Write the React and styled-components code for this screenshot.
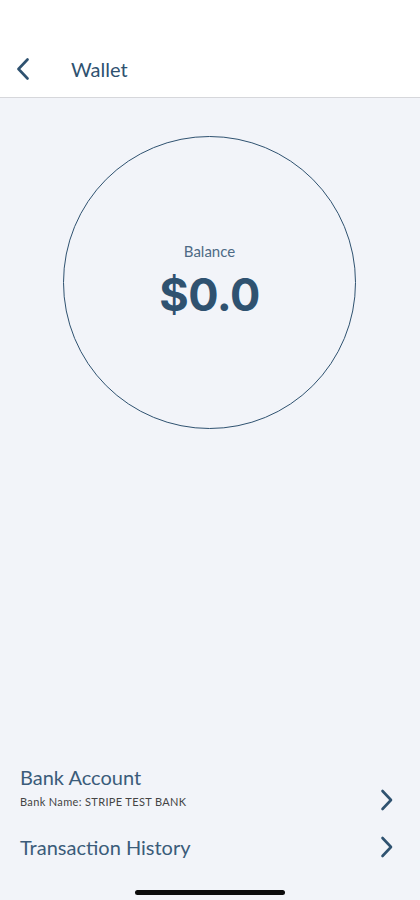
import styled, { createGlobalStyle } from "styled-components";

const GlobalStyle = createGlobalStyle`
  html, body {
    margin: 0;
    padding: 0;
    background: #f2f4f9;
  }
  body {
    font-family: Lato, "Noto Sans", sans-serif;
  }
`;

const Screen = styled.div`
  display: flex;
  flex-flow: column;
  width: 420px;
  height: 900px;
  background: #f2f4f9;
  color: #2f5270;
  overflow: hidden;
`;

const Header = styled.header`
  display: flex;
  align-items: center;
  height: 98px;
  padding: 41px 0 0 9px;
  box-sizing: border-box;
  background: #ffffff;
  border-bottom: 1px solid #d6d7db;
  gap: 34px;
`;

const IconButton = styled.button`
  display: flex;
  align-items: center;
  justify-content: center;
  width: 28px;
  height: 28px;
  padding: 0;
  border: none;
  background: none;
  cursor: pointer;
`;

const Title = styled.h1`
  margin: 0;
  font-size: 20px;
  font-weight: 400;
  color: #2f5270;
`;

const Body = styled.main`
  display: flex;
  flex-flow: column;
  align-items: center;
  flex: 1;
  padding-top: 38px;
`;

const BalanceRing = styled.section`
  display: flex;
  flex-flow: column;
  align-items: center;
  justify-content: center;
  width: 293px;
  height: 293px;
  box-sizing: border-box;
  border: 1px solid #2f5270;
  border-radius: 50%;
  margin-left: -1px;
  gap: 10px;
`;

const BalanceLabel = styled.span`
  font-size: 15px;
  color: #4d6a85;
  margin-top: -4px;
`;

const BalanceAmount = styled.span`
  font-family: Inter, "Noto Sans", sans-serif;
  font-size: 45px;
  font-weight: 700;
  color: #2f5270;
  line-height: 1.1;
  letter-spacing: -0.5px;
`;

const Menu = styled.nav`
  display: flex;
  flex-flow: column;
  padding: 0 26px 0 20px;
  margin-bottom: 20px;
`;

const MenuRow = styled.div`
  display: flex;
  align-items: center;
  justify-content: space-between;
  min-height: ${(p) => p.$height}px;
  cursor: pointer;
`;

const RowText = styled.div`
  display: flex;
  flex-flow: column;
  gap: 9px;
`;

const RowTitle = styled.span`
  font-size: 20px;
  line-height: 1;
  color: #3b5c7a;
`;

const RowSub = styled.span`
  font-size: 11px;
  line-height: 1;
  letter-spacing: 0.35px;
  color: #444444;
`;

const ChevronSlot = styled.span`
  display: flex;
  margin-top: ${(p) => p.$offset || 0}px;
`;

const HomeBar = styled.div`
  width: 150px;
  height: 5px;
  border-radius: 3px;
  background: #0c0c0c;
  margin: 0 auto 5px;
`;

const Chevron = ({ left }) => (
  <svg width="14" height="22" viewBox="0 0 14 22" fill="none">
    <path
      d={left ? "M11.5 1.5 L2.5 11 L11.5 20.5" : "M2.5 2 L11 11 L2.5 20"}
      stroke="#2f5270"
      strokeWidth="2.6"
      strokeLinecap="round"
      strokeLinejoin="round"
    />
  </svg>
);

export default function App() {
  return (
    <>
      <GlobalStyle />
      <Screen>
        <Header>
          <IconButton>
            <Chevron left />
          </IconButton>
          <Title>Wallet</Title>
        </Header>
        <Body>
          <BalanceRing>
            <BalanceLabel>Balance</BalanceLabel>
            <BalanceAmount>$0.0</BalanceAmount>
          </BalanceRing>
        </Body>
        <Menu>
          <MenuRow $height={74}>
            <RowText>
              <RowTitle>Bank Account</RowTitle>
              <RowSub>Bank Name: STRIPE TEST BANK</RowSub>
            </RowText>
            <ChevronSlot $offset={26}>
              <Chevron />
            </ChevronSlot>
          </MenuRow>
          <MenuRow $height={46}>
            <RowTitle>Transaction History</RowTitle>
            <ChevronSlot>
              <Chevron />
            </ChevronSlot>
          </MenuRow>
        </Menu>
        <HomeBar />
      </Screen>
    </>
  );
}
